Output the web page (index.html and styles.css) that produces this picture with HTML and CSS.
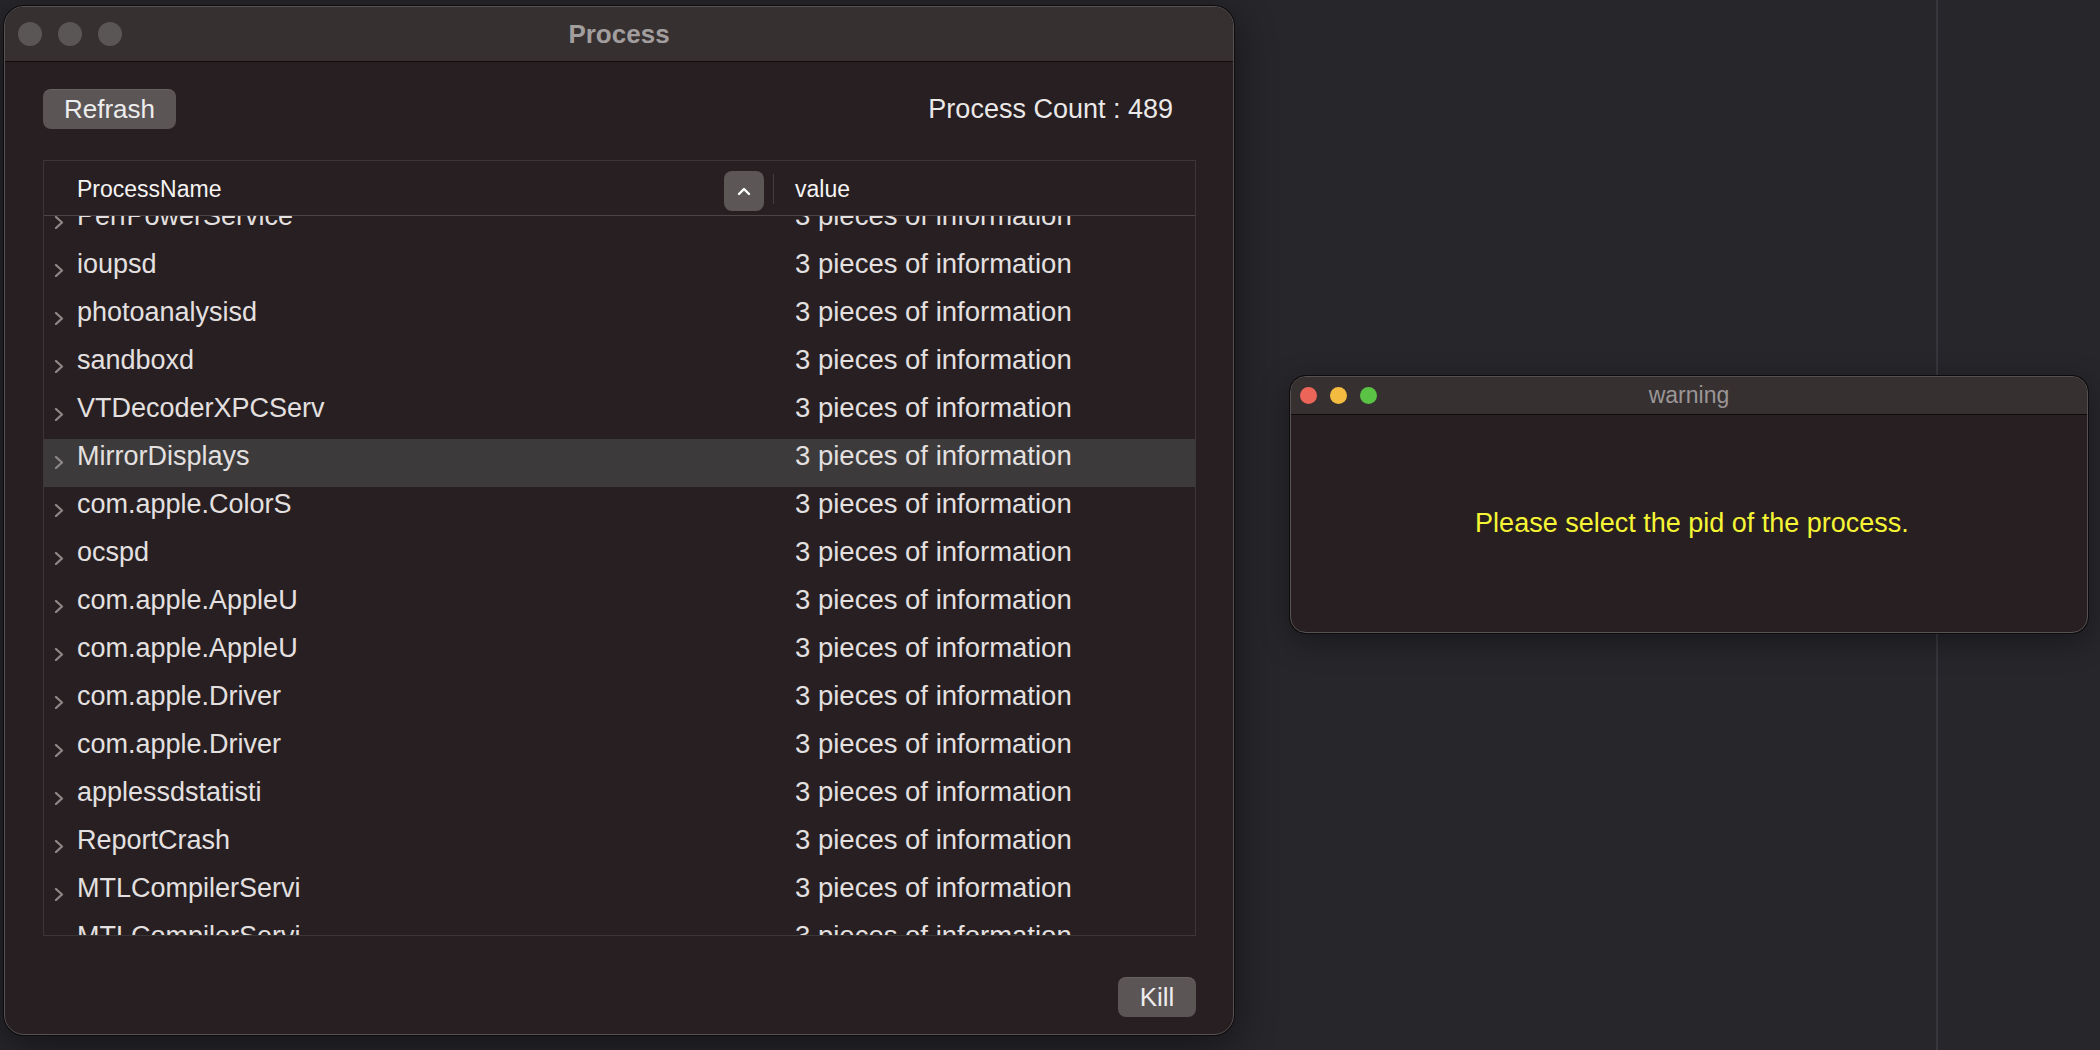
FILE: index.html
```html
<!DOCTYPE html>
<html>
<head>
<meta charset="utf-8">
<title>Process</title>
<link rel="stylesheet" href="styles.css">
</head>
<body>
<div class="desktop">
  <div class="desk-line"></div>

  <div class="window main-window">
    <div class="titlebar">
      <div class="lights">
        <span class="light gray"></span>
        <span class="light gray"></span>
        <span class="light gray"></span>
      </div>
      <div class="title title-bold">Process</div>
    </div>
    <div class="content">
      <div class="toprow">
        <button class="btn btn-refresh">Refrash</button>
        <div class="count">Process Count : 489</div>
      </div>
      <div class="table">
        <div class="thead">
          <div class="th th-name">
            <span>ProcessName</span>
            <span class="sort">
              <svg width="16" height="10" viewBox="0 0 16 10"><path d="M3 8 L8 3 L13 8" fill="none" stroke="#ffffff" stroke-width="2.4" stroke-linecap="round" stroke-linejoin="round"/></svg>
            </span>
          </div>
          <div class="th-sep"></div>
          <div class="th th-value">value</div>
        </div>
        <div class="tbody">
          <div class="rows">
            <div class="row"><svg class="chev" width="12" height="14" viewBox="0 0 12 14"><path d="M3 2 L9 7.5 L3 13" fill="none" stroke="#8d8888" stroke-width="2.3" stroke-linecap="round" stroke-linejoin="round"/></svg><span class="c-name">PerfPowerService</span><span class="c-val">3 pieces of information</span></div>
            <div class="row"><svg class="chev" width="12" height="14" viewBox="0 0 12 14"><path d="M3 2 L9 7.5 L3 13" fill="none" stroke="#8d8888" stroke-width="2.3" stroke-linecap="round" stroke-linejoin="round"/></svg><span class="c-name">ioupsd</span><span class="c-val">3 pieces of information</span></div>
            <div class="row"><svg class="chev" width="12" height="14" viewBox="0 0 12 14"><path d="M3 2 L9 7.5 L3 13" fill="none" stroke="#8d8888" stroke-width="2.3" stroke-linecap="round" stroke-linejoin="round"/></svg><span class="c-name">photoanalysisd</span><span class="c-val">3 pieces of information</span></div>
            <div class="row"><svg class="chev" width="12" height="14" viewBox="0 0 12 14"><path d="M3 2 L9 7.5 L3 13" fill="none" stroke="#8d8888" stroke-width="2.3" stroke-linecap="round" stroke-linejoin="round"/></svg><span class="c-name">sandboxd</span><span class="c-val">3 pieces of information</span></div>
            <div class="row"><svg class="chev" width="12" height="14" viewBox="0 0 12 14"><path d="M3 2 L9 7.5 L3 13" fill="none" stroke="#8d8888" stroke-width="2.3" stroke-linecap="round" stroke-linejoin="round"/></svg><span class="c-name">VTDecoderXPCServ</span><span class="c-val">3 pieces of information</span></div>
            <div class="row selected"><svg class="chev" width="12" height="14" viewBox="0 0 12 14"><path d="M3 2 L9 7.5 L3 13" fill="none" stroke="#8d8888" stroke-width="2.3" stroke-linecap="round" stroke-linejoin="round"/></svg><span class="c-name">MirrorDisplays</span><span class="c-val">3 pieces of information</span></div>
            <div class="row"><svg class="chev" width="12" height="14" viewBox="0 0 12 14"><path d="M3 2 L9 7.5 L3 13" fill="none" stroke="#8d8888" stroke-width="2.3" stroke-linecap="round" stroke-linejoin="round"/></svg><span class="c-name">com.apple.ColorS</span><span class="c-val">3 pieces of information</span></div>
            <div class="row"><svg class="chev" width="12" height="14" viewBox="0 0 12 14"><path d="M3 2 L9 7.5 L3 13" fill="none" stroke="#8d8888" stroke-width="2.3" stroke-linecap="round" stroke-linejoin="round"/></svg><span class="c-name">ocspd</span><span class="c-val">3 pieces of information</span></div>
            <div class="row"><svg class="chev" width="12" height="14" viewBox="0 0 12 14"><path d="M3 2 L9 7.5 L3 13" fill="none" stroke="#8d8888" stroke-width="2.3" stroke-linecap="round" stroke-linejoin="round"/></svg><span class="c-name">com.apple.AppleU</span><span class="c-val">3 pieces of information</span></div>
            <div class="row"><svg class="chev" width="12" height="14" viewBox="0 0 12 14"><path d="M3 2 L9 7.5 L3 13" fill="none" stroke="#8d8888" stroke-width="2.3" stroke-linecap="round" stroke-linejoin="round"/></svg><span class="c-name">com.apple.AppleU</span><span class="c-val">3 pieces of information</span></div>
            <div class="row"><svg class="chev" width="12" height="14" viewBox="0 0 12 14"><path d="M3 2 L9 7.5 L3 13" fill="none" stroke="#8d8888" stroke-width="2.3" stroke-linecap="round" stroke-linejoin="round"/></svg><span class="c-name">com.apple.Driver</span><span class="c-val">3 pieces of information</span></div>
            <div class="row"><svg class="chev" width="12" height="14" viewBox="0 0 12 14"><path d="M3 2 L9 7.5 L3 13" fill="none" stroke="#8d8888" stroke-width="2.3" stroke-linecap="round" stroke-linejoin="round"/></svg><span class="c-name">com.apple.Driver</span><span class="c-val">3 pieces of information</span></div>
            <div class="row"><svg class="chev" width="12" height="14" viewBox="0 0 12 14"><path d="M3 2 L9 7.5 L3 13" fill="none" stroke="#8d8888" stroke-width="2.3" stroke-linecap="round" stroke-linejoin="round"/></svg><span class="c-name">applessdstatisti</span><span class="c-val">3 pieces of information</span></div>
            <div class="row"><svg class="chev" width="12" height="14" viewBox="0 0 12 14"><path d="M3 2 L9 7.5 L3 13" fill="none" stroke="#8d8888" stroke-width="2.3" stroke-linecap="round" stroke-linejoin="round"/></svg><span class="c-name">ReportCrash</span><span class="c-val">3 pieces of information</span></div>
            <div class="row"><svg class="chev" width="12" height="14" viewBox="0 0 12 14"><path d="M3 2 L9 7.5 L3 13" fill="none" stroke="#8d8888" stroke-width="2.3" stroke-linecap="round" stroke-linejoin="round"/></svg><span class="c-name">MTLCompilerServi</span><span class="c-val">3 pieces of information</span></div>
            <div class="row"><svg class="chev" width="12" height="14" viewBox="0 0 12 14"><path d="M3 2 L9 7.5 L3 13" fill="none" stroke="#8d8888" stroke-width="2.3" stroke-linecap="round" stroke-linejoin="round"/></svg><span class="c-name">MTLCompilerServi</span><span class="c-val">3 pieces of information</span></div>
          </div>
        </div>
      </div>
      <div class="bottomrow">
        <button class="btn btn-kill">Kill</button>
      </div>
    </div>
  </div>

  <div class="window warn-window">
    <div class="titlebar warn-titlebar">
      <div class="lights warn-lights">
        <span class="light small red"></span>
        <span class="light small yellow"></span>
        <span class="light small green"></span>
      </div>
      <div class="title title-warn">warning</div>
    </div>
    <div class="warn-body">
      <div class="warn-text">Please select the pid of the process.</div>
    </div>
  </div>
</div>
</body>
</html>
```

FILE: styles.css
```css
* { box-sizing: border-box; }

html, body {
  margin: 0;
  padding: 0;
}

body {
  width: 2100px;
  height: 1050px;
  overflow: hidden;
  background: #26262b;
  font-family: "Liberation Sans", Arial, sans-serif;
}

.desktop {
  position: relative;
  width: 2100px;
  height: 1050px;
  background: #26262b;
}

.desk-line {
  position: absolute;
  left: 1936px;
  top: 0;
  width: 2px;
  height: 1050px;
  background: #36363c;
}

.window {
  position: absolute;
  display: flex;
  flex-direction: column;
  background: #271f21;
  border: 1px solid #575252;
  overflow: hidden;
}

.main-window {
  left: 4px;
  top: 6px;
  width: 1230px;
  height: 1029px;
  border-radius: 20px;
  box-shadow: 0 0 0 1px #0e0c0d, 0 10px 40px rgba(0, 0, 0, 0.45);
}

.titlebar {
  position: relative;
  height: 55px;
  flex: 0 0 auto;
  background: #363031;
  border-bottom: 1px solid #0f0b0c;
  display: flex;
  align-items: center;
}

.lights {
  display: flex;
  gap: 16px;
  padding-left: 13px;
}

.light {
  width: 24px;
  height: 24px;
  border-radius: 50%;
  display: block;
}

.light.gray { background: #5b5656; }

.title {
  position: absolute;
  left: 0;
  right: 0;
  top: 0;
  bottom: 0;
  display: flex;
  align-items: center;
  justify-content: center;
}

.title-bold {
  font-size: 26px;
  font-weight: bold;
  color: #a39e9e;
}

.content {
  flex: 1 1 auto;
  display: flex;
  flex-direction: column;
  padding: 27px 37px 0 38px;
}

.toprow {
  display: flex;
  align-items: center;
  justify-content: space-between;
  height: 40px;
}

.btn {
  font-family: "Liberation Sans", Arial, sans-serif;
  font-size: 26px;
  color: #ededed;
  background: #5b5556;
  border: none;
  border-radius: 8px;
  height: 40px;
  padding: 0;
  line-height: 38px;
  box-shadow: inset 0 1px 0 rgba(255, 255, 255, 0.08);
}

.btn-refresh {
  width: 133px;
}

.count {
  font-size: 27px;
  color: #ebe8e8;
  margin-right: 23px;
  line-height: 36px;
}

.table {
  margin-top: 31px;
  height: 776px;
  border: 1px solid #3b3737;
  display: flex;
  flex-direction: column;
}

.thead {
  height: 55px;
  flex: 0 0 auto;
  display: flex;
  align-items: center;
  border-bottom: 1px solid #4a4545;
}

.th {
  font-size: 23px;
  color: #f5f3f3;
  font-weight: 500;
}

.th-name {
  width: 729px;
  display: flex;
  align-items: center;
  justify-content: space-between;
  padding-left: 33px;
  padding-right: 9px;
  padding-top: 2px;
}

.sort {
  width: 40px;
  height: 40px;
  border-radius: 8px;
  background: #5c5657;
  display: flex;
  align-items: center;
  justify-content: center;
  margin-top: 3px;
}

.th-sep {
  width: 1px;
  height: 30px;
  background: #433e3e;
  margin-top: 2px;
}

.th-value {
  padding-left: 21px;
  padding-top: 2px;
}

.tbody {
  flex: 1 1 auto;
  overflow: hidden;
}

.rows {
  margin-top: -17px;
}

.row {
  height: 48px;
  display: flex;
  align-items: flex-start;
  font-size: 27px;
  color: #e4e0e0;
  line-height: 32px;
  padding-top: 1px;
}

.row.selected {
  background: #3c3a3a;
}

.chev {
  margin-left: 9px;
  margin-top: 15px;
  flex: 0 0 auto;
}

.c-name {
  width: 730px;
  padding-left: 12px;
  white-space: nowrap;
}

.c-val {
  white-space: nowrap;
  font-size: 27.5px;
}

.bottomrow {
  display: flex;
  justify-content: flex-end;
  margin-top: 41px;
}

.btn-kill {
  width: 78px;
}

/* warning window */
.warn-window {
  left: 1290px;
  top: 376px;
  width: 798px;
  height: 257px;
  border-radius: 16px;
  box-shadow: 0 0 0 1px #0e0c0d, 0 8px 30px rgba(0, 0, 0, 0.35);
}

.warn-titlebar {
  height: 38px;
}

.warn-lights {
  gap: 13px;
  padding-left: 9px;
}

.light.small {
  width: 17px;
  height: 17px;
}

.light.red { background: #ec6559; }
.light.yellow { background: #f3bb40; }
.light.green { background: #5ac244; }

.title-warn {
  font-size: 23px;
  color: #9b9696;
}

.warn-body {
  flex: 1 1 auto;
  display: flex;
  align-items: center;
  justify-content: center;
  padding-left: 6px;
}

.warn-text {
  font-size: 27px;
  color: #f6f535;
}
```
